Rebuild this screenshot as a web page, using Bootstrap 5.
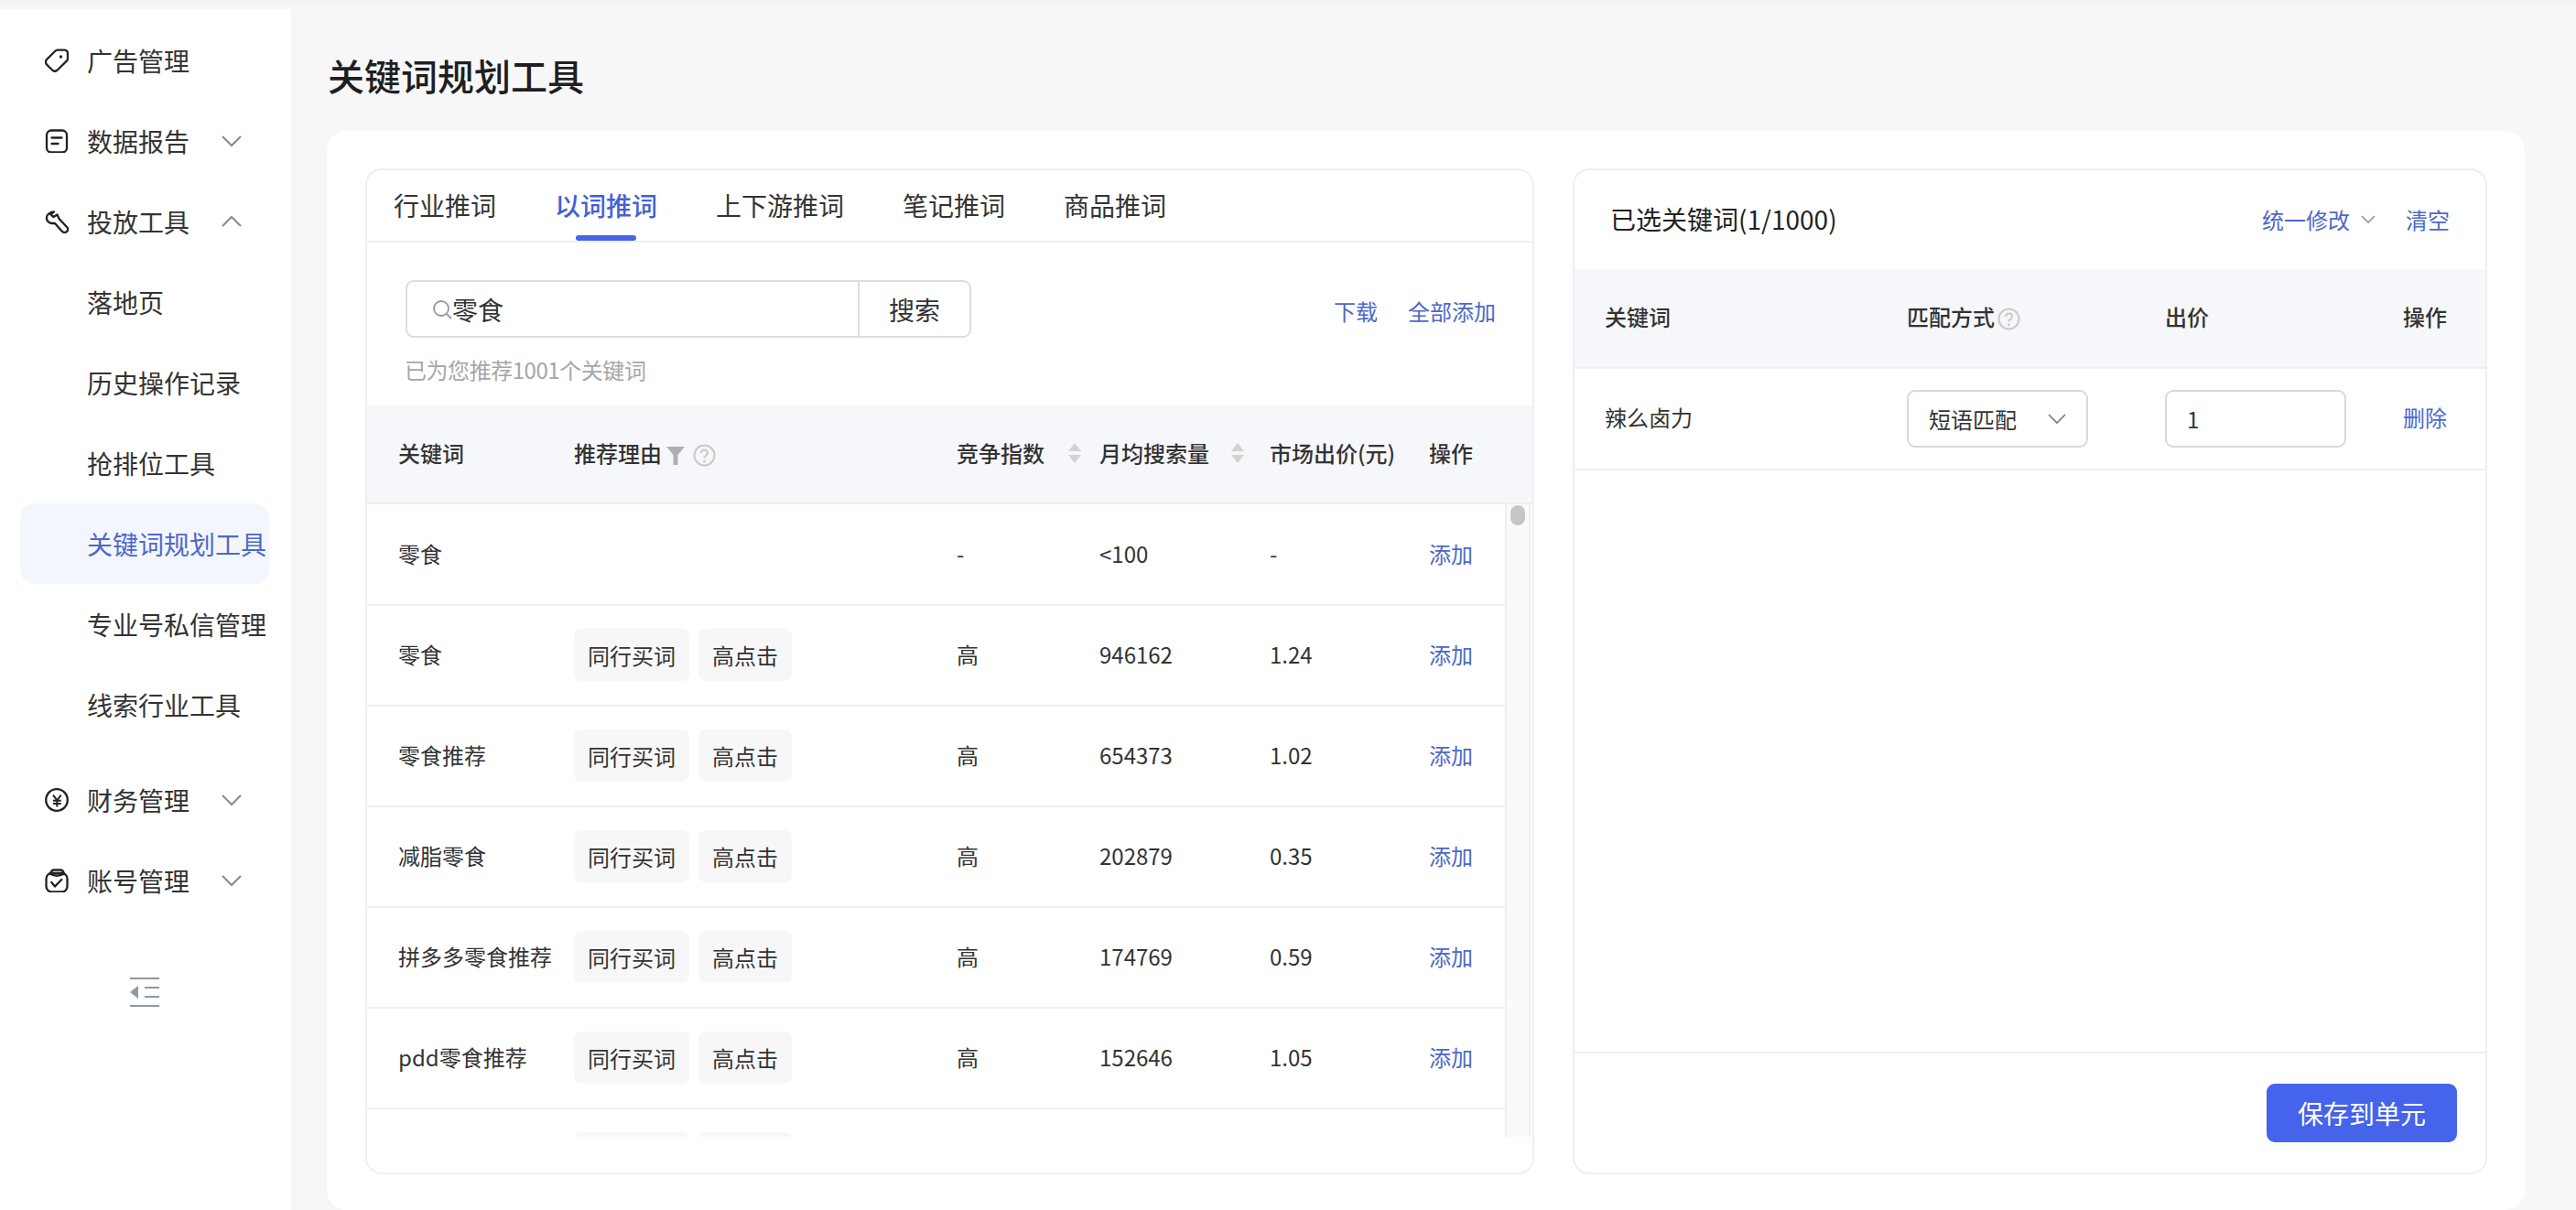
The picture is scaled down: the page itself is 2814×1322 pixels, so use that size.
<!DOCTYPE html>
<html lang="zh-CN">
<head>
<meta charset="utf-8">
<title>关键词规划工具</title>
<link rel="stylesheet" href="https://cdn.jsdelivr.net/npm/bootstrap@5.3.0/dist/css/bootstrap.min.css">
<style>
:root{--ink:#333;--blue:#4d68c9;--line:#efefef;--head:#f6f7fb;}
html,body{height:100%;}
body{font-family:"Noto Sans CJK SC","Noto Sans",sans-serif;color:var(--ink);background:#f7f7f7;overflow:hidden;font-weight:400;}
.top-strip{height:10px;background:linear-gradient(#f3f3f3,#f8f8f8);flex:none;}
.side{width:318px;flex:none;background:#fff;padding-top:12px;}
.side-item{height:88px;margin-left:22px;width:272px;padding-left:27px;display:flex;align-items:center;font-size:28px;color:var(--ink);border-radius:16px;white-space:nowrap;}
.side-ico{width:26px;height:26px;margin-right:20px;flex:none;}
.side-sub{padding-left:73px;}
.side-sub.on{background:#f3f6fd;color:var(--blue);}
.side-chev{width:22px;height:14px;position:relative;left:35px;flex:none;}
.side-gap{margin-top:16px;}
.collapse-ico{width:32px;height:32px;display:block;margin:62px 0 0 142px;}
.main-area{flex:1;min-width:0;padding:0 0 0 39px;display:flex;flex-direction:column;}
.page-title{font-size:40px;line-height:56px;font-weight:500;margin:44px 0 33px 1px;color:#1f1f1f;}
.big-card{flex:1;min-height:0;width:2401px;background:#fff;border-radius:22px;padding:41px 41px 39px 42px;display:flex;gap:42px;}
.panel{border:2px solid var(--line);border-radius:18px;display:flex;flex-direction:column;overflow:hidden;background:#fff;}
.panel-l{width:1277px;flex:none;}
.panel-r{width:999px;flex:none;}
.tab-row{height:79px;border-bottom:2px solid var(--line);padding-left:29px;gap:64px;flex-wrap:nowrap;}
.tab-link{font-size:28px;line-height:76px;height:77px;color:var(--ink);position:relative;padding:0;display:block;white-space:nowrap;}
.tab-link:hover{color:var(--ink);}
.tab-link.on{color:#4560d6;font-weight:500;}
.tab-link.on::after{content:"";position:absolute;left:23px;right:23px;bottom:0;height:6px;border-radius:3px;background:#4763e6;}
.search-row{margin:41px 40px 0 42px;display:flex;align-items:center;justify-content:space-between;}
.search-box{width:618px;height:63px;border:2px solid #dcdcdc;border-radius:9px;display:flex;}
.search-in{flex:1;display:flex;align-items:center;padding-left:27px;font-size:28px;}
.search-in svg{width:22px;height:22px;flex:none;}
.search-btn{width:122px;border:0;border-left:2px solid #dcdcdc;border-radius:0 7px 7px 0;background:#fff;font-size:28px;color:var(--ink);padding:0;}
.blue-link{color:var(--blue);font-size:24px;text-decoration:none;white-space:nowrap;}
.search-acts{display:flex;gap:33px;position:relative;top:2px;}
.hint{margin:18px 0 22px 41px;font-size:24px;line-height:34px;color:#a6a6a6;letter-spacing:-.45px;}
.grid-tb{width:100%;table-layout:fixed;border-collapse:collapse;font-size:24px;}
.grid-tb th,.grid-tb td{padding:0;white-space:nowrap;vertical-align:middle;}
.grid-tb th{font-weight:500;padding-bottom:3px;}
.grid-head{background:var(--head);border-bottom:2px solid var(--line);}
.grid-head th{height:107px;background:var(--head);}
.grid-tb th:first-child,.grid-tb td:first-child{padding-left:34px;}
.grid-tb td{height:110px;border-bottom:2px solid var(--line);padding-bottom:2px;}
.col-a{width:210px;}.col-b{width:418px;}.col-c{width:156px;}.col-d{width:186px;}.col-e{width:174px;}
.tbody-wrap{height:691px;display:flex;overflow:hidden;flex:none;}
.tbody-main{width:1243px;flex:none;}
.tbody-main .grid-tb{width:1243px;}
.fake-track{width:28px;flex:none;background:#fafafa;border-left:2px solid var(--line);border-right:2px solid var(--line);padding:1px 4px 0;}
.fake-thumb{height:22px;border-radius:8px;background:#c6c6c6;}
.tagy{display:inline-block;height:57px;line-height:57px;padding:0 15px;background:#f7f7f7;border-radius:8px;margin-right:10px;font-size:24px;vertical-align:middle;}
.tagy-w1{width:126px;}.tagy-w2{width:102px;}
.ico-filter{width:20px;height:20px;margin-left:5px;vertical-align:-3px;}
.ico-help{width:25px;height:25px;margin-left:9px;vertical-align:-5px;}
.ico-help.tight{margin-left:3px;}
.ico-sort{width:16px;height:22px;vertical-align:-4px;}
.sort-cell{display:flex;align-items:center;justify-content:space-between;}
.sort-c{width:137px;}.sort-d{width:159px;}
.panel-head{height:108px;padding:0 39px 0 39px;display:flex;align-items:center;justify-content:space-between;flex:none;}
.panel-title{font-size:28px;font-weight:400;margin:0;color:#222;}
.panel-acts{display:flex;align-items:center;}
.mini-chev{width:16px;height:10px;margin:0 0 0 12px;}
.mr-clear{margin-left:33px;}
.col-f{width:363px;}.col-g{width:282px;}.col-h{width:260px;}
.panel-r .grid-head th{height:108px;}
.panel-r .grid-tb th:first-child,.panel-r .grid-tb td:first-child{padding-left:33px;}
.panel-r .grid-tb td{height:111px;padding-bottom:0;}
.panel-r .grid-tb td:first-child,.panel-r .grid-tb td:last-child{padding-bottom:3px;}
.pick{width:198px;height:63px;border:2px solid #d9d9d9;border-radius:9px;display:flex;align-items:center;justify-content:space-between;padding:0 22px;font-size:24px;background:#fff;color:var(--ink);}
.pick svg{width:20px;height:12px;}
.amount{width:198px;height:63px;border:2px solid #d9d9d9;border-radius:9px;padding:0 22px;font-size:24px;color:var(--ink);box-shadow:none;}
.panel-foot{margin-top:auto;height:132px;border-top:2px solid var(--line);display:flex;align-items:center;justify-content:flex-end;padding-right:31px;flex:none;}
.save-btn{width:208px;height:64px;padding:0;background:#4663ec;border:0;border-radius:9px;color:#fff;font-size:28px;}
</style>
</head>
<body class="d-flex flex-column">
<div class="top-strip"></div>
<div class="d-flex flex-grow-1" style="min-height:0">
  <aside class="side">
    <ul class="list-unstyled m-0">
      <li class="side-item"><svg class="side-ico" viewBox="0 0 26 26" fill="none" stroke="#222" stroke-width="2.3" stroke-linejoin="round"><path d="M2 12 11 3Q12.3 1.7 14 1.7H21Q25 1.7 25 5.7V11Q25 12.5 23.8 13.6L13.5 23.8Q11 25.6 8.6 24L2 17.5Q-.2 14.6 2 12Z"/><circle cx="17.5" cy="9" r="1.7" fill="#222" stroke="none"/></svg>广告管理</li>
      <li class="side-item"><svg class="side-ico" viewBox="0 0 26 26" fill="none" stroke="#222" stroke-width="2.3" stroke-linecap="round"><rect x="2" y="1.5" width="22" height="24" rx="5"/><path d="M7.5 9.5h11M7.5 16h7"/></svg>数据报告<svg class="side-chev" viewBox="0 0 22 14" fill="none" stroke="#8a8a8a" stroke-width="2"><path d="M1 2l10 10L21 2"/></svg></li>
      <li class="side-item"><svg class="side-ico" viewBox="0 0 26 26" fill="none" stroke="#222" stroke-width="2.3" stroke-linejoin="round"><path d="M10 2.5C6 2.5 2 5.5 1.8 9 1.8 12.5 5 15 8 15H11L18.5 23.6C20 25.3 22.5 25.5 24 24 25.5 22.5 25.5 20.5 24 19L16 10.5C15 9 14.5 7.5 13.5 5.5L9.5 8 6.2 5.2Z"/></svg>投放工具<svg class="side-chev" viewBox="0 0 22 14" fill="none" stroke="#8a8a8a" stroke-width="2"><path d="M1 12 11 2l10 10"/></svg></li>
      <li class="side-item side-sub">落地页</li>
      <li class="side-item side-sub">历史操作记录</li>
      <li class="side-item side-sub">抢排位工具</li>
      <li class="side-item side-sub on">关键词规划工具</li>
      <li class="side-item side-sub">专业号私信管理</li>
      <li class="side-item side-sub">线索行业工具</li>
      <li class="side-item side-gap"><svg class="side-ico" viewBox="0 0 26 26" fill="none" stroke="#222" stroke-width="2.3"><circle cx="13" cy="13" r="11.8"/><path d="M9 7.7l4.3 5.6 4.4-5.6M9 13.7h8.7M9 16.9h8.7M13.3 13.3V20.5" stroke-width="2"/></svg>财务管理<svg class="side-chev" viewBox="0 0 22 14" fill="none" stroke="#8a8a8a" stroke-width="2"><path d="M1 2l10 10L21 2"/></svg></li>
      <li class="side-item"><svg class="side-ico" viewBox="0 0 26 26" fill="none" stroke="#222" stroke-width="2.3" stroke-linecap="round" stroke-linejoin="round"><rect x="1.5" y="5" width="23" height="20.5" rx="6"/><path d="M6 6Q7 1.5 10 1.5H17Q20 1.5 21 6M5.5 5.5Q13 10 21 5.5M7.3 15 11 19.5 18.3 12"/></svg>账号管理<svg class="side-chev" viewBox="0 0 22 14" fill="none" stroke="#8a8a8a" stroke-width="2"><path d="M1 2l10 10L21 2"/></svg></li>
    </ul>
    <svg class="collapse-ico" viewBox="0 0 32 32" fill="none" stroke="#8f98a4" stroke-width="2"><path d="M0 1h32M16 11h16M16 21h16M0 31h32"/><path d="M0 16l9-7v14z" fill="#8f98a4" stroke="none"/></svg>
  </aside>
  <main class="main-area">
    <h1 class="page-title">关键词规划工具</h1>
    <div class="big-card">
      <section class="panel panel-l">
        <ul class="nav tab-row">
          <li class="nav-item"><a class="nav-link tab-link" href="#">行业推词</a></li>
          <li class="nav-item"><a class="nav-link tab-link on" href="#">以词推词</a></li>
          <li class="nav-item"><a class="nav-link tab-link" href="#">上下游推词</a></li>
          <li class="nav-item"><a class="nav-link tab-link" href="#">笔记推词</a></li>
          <li class="nav-item"><a class="nav-link tab-link" href="#">商品推词</a></li>
        </ul>
        <div class="search-row">
          <div class="search-box">
            <div class="search-in"><svg viewBox="0 0 22 22" fill="none" stroke="#9a9a9a" stroke-width="1.8" stroke-linecap="round"><circle cx="10" cy="10" r="8"/><path d="M16 16l4.5 4.5"/></svg>零食</div>
            <button class="btn search-btn" type="button">搜索</button>
          </div>
          <div class="search-acts"><a class="blue-link" href="#">下载</a><a class="blue-link" href="#">全部添加</a></div>
        </div>
        <div class="hint">已为您推荐1001个关键词</div>
        <table class="grid-tb grid-head">
          <colgroup><col class="col-a"><col class="col-b"><col class="col-c"><col class="col-d"><col class="col-e"><col></colgroup>
          <thead><tr>
            <th>关键词</th>
            <th class="ps-3">推荐理由<svg class="ico-filter" viewBox="0 0 20 20"><path d="M0 0H20L12.5 9V20H7.5V9Z" fill="#b0b0b0"/></svg><svg class="ico-help" viewBox="0 0 25 25" fill="none"><circle cx="12.5" cy="12.5" r="11" stroke="#c9c9c9" stroke-width="2"/><path d="M9 10Q9 6.5 12.5 6.5T16 10Q16 12 12.5 14V15.5" stroke="#c9c9c9" stroke-width="2"/><circle cx="12.5" cy="19" r="1.4" fill="#c9c9c9"/></svg></th>
            <th class="ps-3"><span class="sort-cell sort-c">竞争指数<svg class="ico-sort" viewBox="0 0 16 22"><path d="M8 0l7 9H1zM8 22l-7-9h14z" fill="#d2d2d2"/></svg></span></th>
            <th class="ps-3"><span class="sort-cell sort-d">月均搜索量<svg class="ico-sort" viewBox="0 0 16 22"><path d="M8 0l7 9H1zM8 22l-7-9h14z" fill="#d2d2d2"/></svg></span></th>
            <th class="ps-3">市场出价(元)</th>
            <th class="ps-3">操作</th>
          </tr></thead>
        </table>
        <div class="tbody-wrap">
          <div class="tbody-main">
            <table class="grid-tb">
              <colgroup><col class="col-a"><col class="col-b"><col class="col-c"><col class="col-d"><col class="col-e"><col></colgroup>
              <tbody>
                <tr><td>零食</td><td class="ps-3"></td><td class="ps-3">-</td><td class="ps-3">&lt;100</td><td class="ps-3">-</td><td class="ps-3"><a class="blue-link" href="#">添加</a></td></tr>
                <tr><td>零食</td><td class="ps-3"><span class="tagy">同行买词</span><span class="tagy">高点击</span></td><td class="ps-3">高</td><td class="ps-3">946162</td><td class="ps-3">1.24</td><td class="ps-3"><a class="blue-link" href="#">添加</a></td></tr>
                <tr><td>零食推荐</td><td class="ps-3"><span class="tagy">同行买词</span><span class="tagy">高点击</span></td><td class="ps-3">高</td><td class="ps-3">654373</td><td class="ps-3">1.02</td><td class="ps-3"><a class="blue-link" href="#">添加</a></td></tr>
                <tr><td>减脂零食</td><td class="ps-3"><span class="tagy">同行买词</span><span class="tagy">高点击</span></td><td class="ps-3">高</td><td class="ps-3">202879</td><td class="ps-3">0.35</td><td class="ps-3"><a class="blue-link" href="#">添加</a></td></tr>
                <tr><td>拼多多零食推荐</td><td class="ps-3"><span class="tagy">同行买词</span><span class="tagy">高点击</span></td><td class="ps-3">高</td><td class="ps-3">174769</td><td class="ps-3">0.59</td><td class="ps-3"><a class="blue-link" href="#">添加</a></td></tr>
                <tr><td>pdd零食推荐</td><td class="ps-3"><span class="tagy">同行买词</span><span class="tagy">高点击</span></td><td class="ps-3">高</td><td class="ps-3">152646</td><td class="ps-3">1.05</td><td class="ps-3"><a class="blue-link" href="#">添加</a></td></tr>
                <tr><td></td><td class="ps-3"><span class="tagy tagy-w1"></span><span class="tagy tagy-w2"></span></td><td></td><td></td><td></td><td></td></tr>
              </tbody>
            </table>
          </div>
          <div class="fake-track"><div class="fake-thumb"></div></div>
        </div>
      </section>
      <section class="panel panel-r">
        <div class="panel-head">
          <h2 class="panel-title">已选关键词(1/1000)</h2>
          <div class="panel-acts"><a class="blue-link" href="#">统一修改</a><svg class="mini-chev" viewBox="0 0 16 10" fill="none" stroke="#8a94a6" stroke-width="1.6"><path d="M1 1l7 7 7-7"/></svg><a class="blue-link mr-clear" href="#">清空</a></div>
        </div>
        <table class="grid-tb">
          <colgroup><col class="col-f"><col class="col-g"><col class="col-h"><col></colgroup>
          <thead class="grid-head"><tr>
            <th>关键词</th>
            <th>匹配方式<svg class="ico-help tight" viewBox="0 0 25 25" fill="none"><circle cx="12.5" cy="12.5" r="11" stroke="#c9c9c9" stroke-width="2"/><path d="M9 10Q9 6.5 12.5 6.5T16 10Q16 12 12.5 14V15.5" stroke="#c9c9c9" stroke-width="2"/><circle cx="12.5" cy="19" r="1.4" fill="#c9c9c9"/></svg></th>
            <th>出价</th>
            <th>操作</th>
          </tr></thead>
          <tbody>
            <tr>
              <td>辣么卤力</td>
              <td><div class="pick">短语匹配<svg viewBox="0 0 20 12" fill="none" stroke="#777" stroke-width="1.6"><path d="M1 1l9 9 9-9"/></svg></div></td>
              <td><input class="form-control amount" type="text" value="1" aria-label="出价"></td>
              <td><a class="blue-link" href="#">删除</a></td>
            </tr>
          </tbody>
        </table>
        <div class="panel-foot"><button class="btn save-btn" type="button">保存到单元</button></div>
      </section>
    </div>
  </main>
</div>
<script src="https://cdn.jsdelivr.net/npm/bootstrap@5.3.0/dist/js/bootstrap.bundle.min.js"></script>
</body>
</html>
